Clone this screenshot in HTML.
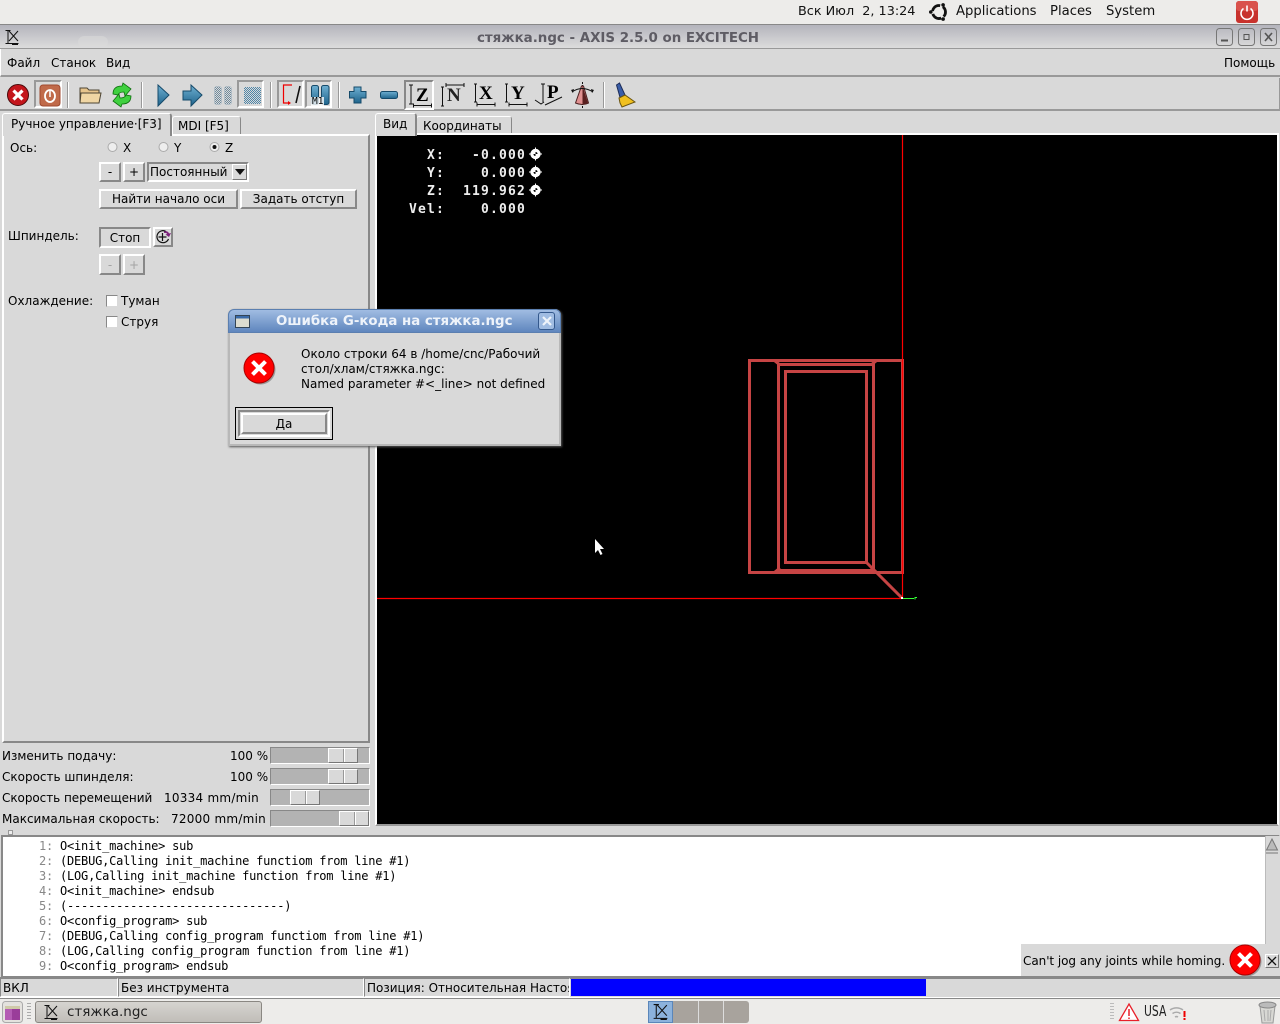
<!DOCTYPE html>
<html><head><meta charset="utf-8"><style>
html,body{margin:0;padding:0;width:1280px;height:1024px;overflow:hidden;background:#d9d9d9}
body{position:relative;font-family:"DejaVu Sans","Liberation Sans",sans-serif;font-size:12px;color:#000}
div,span,svg{position:absolute;box-sizing:border-box}
.t{white-space:nowrap;line-height:14px}
.b{background:#d9d9d9;border:2px solid;border-color:#fff #888 #888 #fff;text-align:center;white-space:nowrap;line-height:16px}
.s{background:#d9d9d9;border:2px solid;border-color:#888 #fff #fff #888}
.sep{width:2px;top:82px;height:26px;background:linear-gradient(90deg,#999 50%,#fff 50%)}
.tr{left:270px;width:100px;height:17px;background:#b3b3b3;border:1px solid;border-color:#888 #fff #fff #888}
.th{width:30px;height:15px;top:0;background:linear-gradient(90deg,#d9d9d9 14px,#999 14px,#999 15px,#fff 15px,#fff 16px,#d9d9d9 16px);border:1px solid;border-color:#fff #777 #777 #fff}
.m{font-family:"DejaVu Sans Mono",monospace;font-size:12px;letter-spacing:-.22px;line-height:15px;white-space:pre;left:4px}
.g{color:#888}
.d{font-family:"DejaVu Sans Mono",monospace;font-size:13px;letter-spacing:1.17px;color:#eee;white-space:pre;line-height:18px;font-weight:bold}
.p{font-size:13.2px;line-height:16px;color:#111;white-space:nowrap;top:4px}
.v{font-family:"Liberation Serif",serif;font-weight:bold;font-size:19px;line-height:22px}
.sl{letter-spacing:.25px}
</style></head><body>

<!-- top panel -->
<div style="left:0;top:0;width:1280px;height:25px;background:#edecea;border-bottom:1px solid #888"></div>
<div class="t p" style="left:798px;font-size:12.8px">Вск Июл&nbsp; 2, 13:24</div>
<svg style="left:929px;top:2px" width="20" height="20" viewBox="0 0 20 20"><circle cx="10" cy="10" r="6.500" fill="none" stroke="#111" stroke-width="2.800" pathLength="40.800" stroke-dasharray="10.600 3" transform="rotate(-47 10 10)"/><circle cx="1.800" cy="10" r="1.800" fill="#111"/><circle cx="14.100" cy="2.900" r="1.800" fill="#111"/><circle cx="14.100" cy="17.100" r="1.800" fill="#111"/></svg>
<div class="t p" style="left:956px">Applications</div>
<div class="t p" style="left:1050px">Places</div>
<div class="t p" style="left:1106px">System</div>
<svg style="left:1236px;top:1px" width="22" height="22" viewBox="0 0 22 22"><rect width="22" height="22" rx="3" fill="#c8322d"/><rect width="22" height="10" rx="3" fill="#d9524c"/><path d="M7.500 7.500a6 6 0 1 0 7 0" fill="none" stroke="#fff" stroke-width="1.600"/><path d="M11 4.500v6" stroke="#fff" stroke-width="1.600"/></svg>

<!-- title bar -->
<div style="left:0;top:25px;width:1280px;height:24px;background:linear-gradient(#b4b4bc,#dcdcdc);border-bottom:1px solid #999"></div>
<div style="left:78px;top:36px;width:30px;height:12px;background:#dcdcdc;border-radius:12px;opacity:.5"></div>
<svg style="left:4px;top:29px" width="16" height="17" viewBox="0 0 16 17" fill="none" stroke="#111"><path d="M1.500 1.500h5M4 1.500v13M1.500 14.500h13M8 15.500h6M5 2l9 10M14 2 5 12"/></svg>
<div class="t" style="left:0;top:32px;width:1236px;text-align:center;font-weight:bold;font-size:13.400px;color:#5e5c64">стяжка.ngc - AXIS 2.5.0 on EXCITECH</div>
<svg style="left:1215px;top:28px" width="65" height="18" viewBox="0 0 65 18" fill="none" stroke="#777"><rect x="1.500" y=".5" width="16" height="17" rx="3"/><rect x="23.500" y=".5" width="16" height="17" rx="3"/><rect x="45.500" y=".5" width="16" height="17" rx="3"/><path d="M6 12.500h7" stroke="#555" stroke-width="2"/><rect x="29" y="6.500" width="5" height="5" stroke="#555"/><path d="M50 5l7 8M57 5l-7 8" stroke="#555" stroke-width="1.600"/></svg>

<!-- menu -->
<div style="left:0;top:49px;width:1280px;height:28px;background:#d9d9d9;border-bottom:2px solid #999;border-left:1px solid #fff"></div>
<div class="t" style="left:7px;top:56px">Файл</div>
<div class="t" style="left:51px;top:56px">Станок</div>
<div class="t" style="left:106px;top:56px">Вид</div>
<div class="t" style="left:1224px;top:56px">Помощь</div>

<!-- toolbar -->
<div style="left:0;top:78px;width:1280px;height:33px;background:#d9d9d9;border-bottom:2px solid #999;border-right:1px solid #999"></div>
<div class="sep" style="left:67px"></div><div class="sep" style="left:141px"></div><div class="sep" style="left:270px"></div><div class="sep" style="left:338px"></div><div class="sep" style="left:603px"></div>
<div class="s" style="left:34px;top:80px;width:28px;height:28px;border-color:#999 #fff #fff #999"></div>
<div class="s" style="left:237px;top:80px;width:27px;height:28px;border-color:#999 #fff #fff #999"></div>
<div class="s" style="left:277px;top:80px;width:27px;height:28px;border-color:#999 #fff #fff #999"></div>
<div class="s" style="left:305px;top:80px;width:27px;height:28px;border-color:#999 #fff #fff #999"></div>
<div class="s" style="left:404px;top:80px;width:30px;height:30px;border-color:#888 #fff #fff #888"></div>
<svg style="left:0;top:78px" width="650" height="32" viewBox="0 78 650 32">
<defs><pattern id="dth" width="2" height="2" patternUnits="userSpaceOnUse"><rect width="2" height="2" fill="#d9d9d9"/><rect width="1" height="1" fill="#4f86a8"/><rect x="1" y="1" width="1" height="1" fill="#4f86a8"/></pattern>
<pattern id="dtp" width="2" height="2" patternUnits="userSpaceOnUse"><rect width="2" height="2" fill="#d9d9d9"/><rect width="1" height="1" fill="#6f8a9c"/><rect x="1" y="1" width="1" height="1" fill="#6f8a9c"/></pattern>
<linearGradient id="bl" x1="0" y1="0" x2="0" y2="1"><stop offset="0" stop-color="#6fb0d2"/><stop offset="1" stop-color="#1f648c"/></linearGradient></defs>
<circle cx="18" cy="95" r="10.500" fill="#c4161c" stroke="#4a0a0a"/><path d="M13.500 90.500l9 9M22.500 90.500l-9 9" stroke="#fff" stroke-width="3.200"/>
<rect x="40" y="85" width="20" height="21" rx="3" fill="#c06a4a" stroke="#a04a30"/><ellipse cx="50" cy="96" rx="5" ry="6" fill="none" stroke="#fff" stroke-width="1.800"/><path d="M50 91v6" stroke="#fff" stroke-width="1.500"/>
<path d="M80 103V88h7l2 2h10v13z" fill="#e6c48c" stroke="#4d4534"/><path d="M80 103l1-10h20l-2 10z" fill="#f0d6a4" stroke="#4d4534"/>
<path d="M113 94q0-8 9-8l1-3 8 6-6 7-1-4q-5 0-6 3z" fill="#3fd03f" stroke="#0e6e0e" stroke-width=".8"/><path d="M113 94q0-8 9-8l1-3 8 6-6 7-1-4q-5 0-6 3z" fill="#3fd03f" stroke="#0e6e0e" stroke-width=".8" transform="rotate(180 122 95)"/>
<path d="M158 85l11 10-11 11z" fill="url(#bl)" stroke="#154a6a"/>
<path d="M183 91h8v-6l11 10-11 11v-6h-8z" fill="url(#bl)" stroke="#154a6a"/>
<rect x="214.500" y="86.500" width="7" height="18" rx="2" fill="url(#dtp)" stroke="#a8b8c4" stroke-width=".6"/><rect x="224.500" y="86.500" width="7" height="18" rx="2" fill="url(#dtp)" stroke="#a8b8c4" stroke-width=".6"/>
<rect x="244" y="87" width="17" height="17" fill="url(#dth)"/>
<path d="M292 85h-8.500v18h6" fill="none" stroke="#e00" stroke-width="1.200"/><path d="M288 101l3 2-3 2z" fill="#e00"/><path d="M300 86l-4 17" stroke="#111" stroke-width="1.600"/>
<rect x="311.500" y="85.500" width="7" height="19" rx="2" fill="url(#bl)" stroke="#154a6a"/><rect x="321.500" y="85.500" width="7.500" height="19" rx="2" fill="url(#bl)" stroke="#154a6a"/>
<path d="M354.500 87.500h7v4.500h5v6.500h-5v5h-7v-5h-4.500v-6.500h4.500z" fill="url(#bl)" stroke="#154a6a" transform="translate(-.5 -.5)"/>
<rect x="380.500" y="91.500" width="17" height="7" rx="2" fill="url(#bl)" stroke="#154a6a"/>
<g fill="none" stroke="#111"><path d="M409 85h4M411 85v19M409 104h4M413.500 105.500h18M413.500 103.500v4M431.500 103.500v4"/>
<path d="M441 87h3M442.500 87v19M441 106h3M446 85h18M446 83v4M464 83v4"/>
<path d="M474 84h3M475.500 84v18M474 102h3M477 104.500h18M477 102.500v4M495 102.500v4"/>
<path d="M505 84h3M506.500 84v18M505 102h3M509 104.500h18M509 102.500v4M527 102.500v4"/>
<path d="M535 100l6 4 3-2M543 84v18M545 105l17-8M541 84h4"/></g>
<path d="M582.500 82v26" stroke="#111" stroke-dasharray="2 1"/><path d="M575.500 103l6-17h2l5 17q-6 3-13 0z" fill="#e09090" stroke="#4a2020"/><path d="M582.500 86l5.500 17q-3 2-5.500 1.500z" fill="#5a2020"/><path d="M572 92q10-7 21 0" fill="none" stroke="#111"/><path d="M571 90l3-1-1 4zM594 90l-3-1 1 4z" fill="#111"/>
<path d="M616.500 85l3-2 6 13-5 3z" fill="#3a5ea8" stroke="#1c2c58"/><path d="M619 98l6-3 10 7-13 5-2-4z" fill="#f0c020" stroke="#6a5410"/>
</svg>
<div class="t" style="left:311px;top:97px;font-family:'DejaVu Sans Mono',monospace;font-size:9.500px;background:rgba(255,255,255,.8);line-height:10px;padding:0 1px">M1</div>
<div class="t v" style="left:416px;top:85px">Z</div>
<div class="t v" style="left:447px;top:85px;color:#222">N</div>
<div class="t v" style="left:479px;top:83px">X</div>
<div class="t v" style="left:511px;top:83px">Y</div>
<div class="t v" style="left:547px;top:82px">P</div>

<!-- tabs left -->
<div style="left:172px;top:116px;width:69px;height:19px;background:#d9d9d9;border:1px solid #fff;border-right-color:#888;border-bottom:0;border-radius:3px 3px 0 0"></div>
<div style="left:2px;top:113px;width:170px;height:23px;background:#d9d9d9;border:1px solid #fff;border-right:2px solid #888;border-bottom:0;border-radius:3px 3px 0 0;z-index:2"></div>
<div class="t" style="left:11px;top:117px;z-index:3">Ручное управление·[F3]</div>
<div class="t" style="left:178px;top:119px">MDI [F5]</div>
<div style="left:2px;top:134px;width:368px;height:609px;border:2px solid;border-color:#fff #888 #888 #fff"></div>

<!-- tabs right -->
<div style="left:416px;top:116px;width:96px;height:19px;background:#d9d9d9;border:1px solid #fff;border-right-color:#888;border-bottom:0;border-radius:3px 3px 0 0"></div>
<div style="left:375px;top:113px;width:42px;height:23px;background:#d9d9d9;border:1px solid #fff;border-right:2px solid #888;border-bottom:0;border-radius:3px 3px 0 0;z-index:2"></div>
<div class="t" style="left:383px;top:117px;z-index:3">Вид</div>
<div class="t" style="left:423px;top:119px">Координаты</div>

<!-- left controls -->
<div class="t" style="left:10px;top:141px">Ось:</div>
<svg style="left:106px;top:141px" width="125" height="13" viewBox="0 0 125 13"><g fill="#eee" stroke="#aaa"><circle cx="6.500" cy="6" r="4.500"/><circle cx="57.500" cy="6" r="4.500"/><circle cx="108.500" cy="6" r="4.500"/></g><circle cx="108.500" cy="6" r="2" fill="#111"/></svg>
<div class="t" style="left:123px;top:141px">X</div>
<div class="t" style="left:174px;top:141px">Y</div>
<div class="t" style="left:225px;top:141px">Z</div>
<div class="b" style="left:99px;top:162px;width:22px;height:20px">-</div>
<div class="b" style="left:123px;top:162px;width:22px;height:20px">+</div>
<div class="s" style="left:147px;top:162px;width:102px;height:20px;border-right-color:#fff"></div>
<div class="t" style="left:150px;top:165px">Постоянный</div>
<div class="b" style="left:232px;top:164px;width:15px;height:16px;border-width:1px;border-color:#fff #777 #777 #fff"></div>
<svg style="left:235px;top:169px" width="10" height="6"><path d="M0 0h10L5 6z" fill="#111"/></svg>
<div class="b" style="left:99px;top:189px;width:139px;height:20px">Найти начало оси</div>
<div class="b" style="left:240px;top:189px;width:117px;height:20px">Задать отступ</div>
<div class="t" style="left:8px;top:229px">Шпиндель:</div>
<div class="s" style="left:99px;top:227px;width:52px;height:21px;text-align:center;line-height:18px;white-space:nowrap">Стоп</div>
<div class="b" style="left:153px;top:227px;width:20px;height:20px"></div>
<svg style="left:156px;top:229px" width="16" height="16" viewBox="0 0 16 16" fill="none" stroke="#111" stroke-width="1.200"><path d="M10 2.500A6 6 0 1 0 12.500 10"/><path d="M6.500 4v8M2.500 8h8"/><path d="M8 2.500q4-1 5 2l2-.5-2 4-3.500-2.500 1.800-.5q-1-1.500-3.300-1z" fill="#7a1f7a" stroke="none"/></svg>
<div class="b" style="left:99px;top:254px;width:22px;height:21px;color:#a3a3a3;line-height:18px">-</div>
<div class="b" style="left:123px;top:254px;width:22px;height:21px;color:#a3a3a3;line-height:18px">+</div>
<div class="t" style="left:8px;top:294px">Охлаждение:</div>
<div style="left:106px;top:295px;width:12px;height:12px;background:#fff;border:1px solid;border-color:#888 #d9d9d9 #d9d9d9 #888"></div>
<div class="t" style="left:121px;top:294px">Туман</div>
<div style="left:106px;top:316px;width:12px;height:12px;background:#fff;border:1px solid;border-color:#888 #d9d9d9 #d9d9d9 #888"></div>
<div class="t" style="left:121px;top:315px">Струя</div>

<!-- sliders -->
<div class="t" style="left:2px;top:749px">Изменить подачу:</div><div class="t" style="left:230px;top:749px">100 %</div>
<div class="tr" style="top:747px"><div class="th" style="left:57px"></div></div>
<div class="t" style="left:2px;top:770px">Скорость шпинделя:</div><div class="t" style="left:230px;top:770px">100 %</div>
<div class="tr" style="top:768px"><div class="th" style="left:57px"></div></div>
<div class="t" style="left:2px;top:791px;letter-spacing:-.05px">Скорость перемещений</div><div class="t sl" style="left:164px;top:791px">10334 mm/min</div>
<div class="tr" style="top:789px"><div class="th" style="left:19px"></div></div>
<div class="t" style="left:2px;top:812px">Максимальная скорость:</div><div class="t sl" style="left:171px;top:812px">72000 mm/min</div>
<div class="tr" style="top:810px"><div class="th" style="left:68px"></div></div>
<div style="left:8px;top:830px;width:5px;height:5px;background:#eee;border:1px solid #999"></div>

<!-- canvas -->
<div style="left:375px;top:133px;width:904px;height:693px;border:2px solid;border-color:#fff #fff #999 #fff;background:#000"></div>
<svg style="left:377px;top:135px" width="900" height="689" viewBox="377 135 900 689">
<g fill="none" stroke="#c64444" stroke-width="3">
<rect x="749.500" y="360.500" width="153" height="212" shape-rendering="crispEdges"/>
<rect x="778.500" y="364.500" width="95" height="206" shape-rendering="crispEdges"/>
<rect x="785.500" y="371.500" width="81" height="191" shape-rendering="crispEdges"/>
<path d="M775 361l5 4M876 361l-5 4M775 572l5-4M876 572l-5-4"/>
<path d="M866 562l36 36" stroke-width="3"/>
</g>
<path d="M902.500 135v463M377 598.500h525" stroke="#f00" stroke-width="1.200" fill="none"/>
<path d="M903 598.500h11M915 599.500v-2h2" stroke="#3f3" fill="none"/>
<rect x="901" y="597" width="2" height="2" fill="#fff"/>
<g fill="#fff"><circle cx="535.500" cy="154" r="5.200"/><path d="M535.500 147.500v13M529 154h13" stroke="#fff"/><path d="M535.500 152a2 2 0 0 1 2 2h-2z" fill="#000"/><path d="M535.500 156a2 2 0 0 1-2-2h2z" fill="#000"/></g>
<g fill="#fff"><circle cx="535.500" cy="172" r="5.200"/><path d="M535.500 165.500v13M529 172h13" stroke="#fff"/><path d="M535.500 170a2 2 0 0 1 2 2h-2z" fill="#000"/><path d="M535.500 174a2 2 0 0 1-2-2h2z" fill="#000"/></g>
<g fill="#fff"><circle cx="535.500" cy="190" r="5.200"/><path d="M535.500 183.500v13M529 190h13" stroke="#fff"/><path d="M535.500 188a2 2 0 0 1 2 2h-2z" fill="#000"/><path d="M535.500 192a2 2 0 0 1-2-2h2z" fill="#000"/></g>
<path d="M595 539v14l3-3 2.500 5 2-1-2.500-5h4z" fill="#fff"/>
</svg>
<div class="d" style="left:409px;top:147px">  X:   -0.000
  Y:    0.000
  Z:  119.962
Vel:    0.000</div>

<!-- text -->
<div style="left:1px;top:835px;width:1279px;height:143px;background:#fff;border:2px solid;border-color:#888 #fff #888 #888"></div>
<div class="m" style="top:839px"><span class="g" style="position:static">     1: </span>O&lt;init_machine&gt; sub
<span class="g" style="position:static">     2: </span>(DEBUG,Calling init_machine functiom from line #1)
<span class="g" style="position:static">     3: </span>(LOG,Calling init_machine function from line #1)
<span class="g" style="position:static">     4: </span>O&lt;init_machine&gt; endsub
<span class="g" style="position:static">     5: </span>(-------------------------------)
<span class="g" style="position:static">     6: </span>O&lt;config_program&gt; sub
<span class="g" style="position:static">     7: </span>(DEBUG,Calling config_program functiom from line #1)
<span class="g" style="position:static">     8: </span>(LOG,Calling config_program function from line #1)
<span class="g" style="position:static">     9: </span>O&lt;config_program&gt; endsub</div>
<div style="left:1265px;top:836px;width:15px;height:141px;background:#d9d9d9;border-left:1px solid #bbb"></div>
<svg style="left:1265px;top:838px" width="14" height="16"><path d="M7 1l5.500 11h-11z" fill="#bbb" stroke="#777"/><path d="M1 15h12" stroke="#777"/></svg>

<!-- status -->
<div style="left:0;top:977px;width:1280px;height:21px;background:#d9d9d9;border-top:2px solid #888;border-bottom:1px solid #fff"></div>
<div class="s" style="left:0;top:978px;width:118px;height:19px;border-width:1px"></div>
<div class="s" style="left:118px;top:978px;width:246px;height:19px;border-width:1px"></div>
<div class="s" style="left:364px;top:978px;width:206px;height:19px;border-width:1px"></div>
<div class="t" style="left:3px;top:981px">ВКЛ</div>
<div class="t" style="left:121px;top:981px">Без инструмента</div>
<div class="t" style="left:367px;top:981px;width:202px;overflow:hidden;position:absolute">Позиция: Относительная Настоящая</div>
<div style="left:571px;top:979px;width:355px;height:17px;background:#00f"></div>

<!-- notification -->
<div style="left:1021px;top:944px;width:259px;height:33px;background:#d9d9d9;border-bottom:1px solid #888"></div>
<div class="t" style="left:1023px;top:954px;letter-spacing:-.05px">Can't jog any joints while homing.</div>
<svg style="left:1228px;top:943px" width="36" height="36" viewBox="0 0 36 36"><circle cx="18.500" cy="18.500" r="15" fill="#999"/><circle cx="17" cy="17" r="15" fill="#f00" stroke="#a00"/><path d="M10.500 10.500l13 13M23.500 10.500l-13 13" stroke="#fff" stroke-width="4"/></svg>
<div class="b" style="left:1265px;top:954px;width:14px;height:14px;border-width:1px;border-color:#fff #777 #777 #fff"></div>
<svg style="left:1267px;top:956px" width="10" height="10"><path d="M1 1l8 8M9 1l-8 8" stroke="#111" stroke-width="1.300"/></svg>

<!-- bottom panel -->
<div style="left:0;top:998px;width:1280px;height:26px;background:#edecea;border-top:1px solid #888"></div>
<svg style="left:2px;top:1001px" width="22" height="22" viewBox="0 0 22 22"><rect x=".5" y=".5" width="20" height="21" rx="3" fill="#e4e2de" stroke="#aaa"/><rect x="3" y="5" width="15" height="14" fill="#9a3d9a"/><rect x="3" y="5" width="15" height="3" fill="#cfc9a8"/><rect x="3" y="8" width="7" height="11" fill="#b45cb4"/></svg>
<div style="left:27px;top:1003px;width:4px;height:18px;background:repeating-linear-gradient(#aaa 0 1px,transparent 1px 3px)"></div>
<div style="left:35px;top:1001px;width:227px;height:22px;background:linear-gradient(#d6d4d0,#c0bdb8);border:1px solid #8a8782;border-radius:3px"></div>
<svg style="left:43px;top:1004px" width="16" height="17" viewBox="0 0 16 17" fill="none" stroke="#111"><path d="M1.500 1.500h5M4 1.500v13M1.500 14.500h13M8 15.500h6M5 2l9 10M14 2 5 12"/></svg>
<div class="t" style="left:67px;top:1005px;font-size:13.500px;color:#222">стяжка.ngc</div>
<div style="left:648px;top:1001px;width:101px;height:22px;background:#a8a39d;border-radius:3px"></div>
<div style="left:648px;top:1001px;width:25px;height:22px;background:#8cb2dc;border:1px solid #5a86ba"></div>
<div style="left:698px;top:1001px;width:1px;height:22px;background:#ddd"></div>
<div style="left:723px;top:1001px;width:1px;height:22px;background:#ddd"></div>
<svg style="left:652px;top:1003px" width="17" height="18" viewBox="0 0 16 17" fill="none" stroke="#111"><path d="M1.500 1.500h5M4 1.500v13M1.500 14.500h13M8 15.500h6M5 2l9 10M14 2 5 12"/></svg>
<div style="left:1110px;top:1003px;width:4px;height:18px;background:repeating-linear-gradient(#bbb 0 1px,transparent 1px 3px)"></div>
<svg style="left:1118px;top:1002px" width="22" height="20" viewBox="0 0 22 20"><path d="M11 2l9.500 16.500h-19z" fill="#fff" stroke="#e8202a" stroke-width="1.300"/><path d="M11 7v7M11 15.500v1.500" stroke="#e8202a" stroke-width="1.500"/></svg>
<div class="t" style="left:1144px;top:1004px;font-size:15px;color:#222;transform:scaleX(.72);transform-origin:0 0">USA</div>
<svg style="left:1169px;top:1003px" width="18" height="18" viewBox="0 0 18 18" fill="none" stroke="#aaa" stroke-width="1.500"><path d="M1 7a11 11 0 0 1 13 0M3.500 10.500a7 7 0 0 1 8 0M6 14a3 3 0 0 1 3 0"/><path d="M15.500 8v6M15.500 15v2" stroke="#e00" stroke-width="2"/></svg>
<svg style="left:1257px;top:1001px" width="22" height="23" viewBox="0 0 22 23"><path d="M3 5l2 17h11l2-17z" fill="#d8d8d4" stroke="#999"/><ellipse cx="10.500" cy="4" rx="8.500" ry="3" fill="#bbb" stroke="#888"/><path d="M7 9l1 11M11 9v11M14 9l-1 11" stroke="#aaa"/></svg>

<!-- dialog -->
<div style="left:228px;top:309px;width:333px;height:137px;background:#d9d9d9;border:2px solid #b8b8b8;border-top:0;border-radius:6px 6px 0 0;box-shadow:1px 1px 2px #555;z-index:5">
</div>
<div style="left:228px;top:309px;width:333px;height:24px;background:linear-gradient(#a0bce2,#5f86be);border:1px solid #5b7fb0;border-radius:6px 6px 0 0;z-index:5"></div>
<svg style="left:235px;top:315px;z-index:6" width="15" height="13"><rect x=".5" y=".5" width="14" height="12" fill="#dcdcd0" stroke="#345"/><rect x="1" y="1" width="13" height="2.500" fill="#3a6aa8"/></svg>
<div class="t" style="left:276px;top:315px;font-weight:bold;font-size:13.350px;color:#eef3fa;z-index:6">Ошибка G-кода на стяжка.ngc</div>
<div style="left:538px;top:312px;width:17px;height:18px;border:1px solid #34588c;border-radius:3px;background:#a0bce2;z-index:6"></div>
<svg style="left:541px;top:315px;z-index:7" width="12" height="12"><path d="M2 2l8 8M10 2l-8 8" stroke="#eef3fa" stroke-width="2.200"/></svg>
<svg style="left:242px;top:350px;z-index:6" width="36" height="36" viewBox="0 0 36 36"><circle cx="18.500" cy="19.500" r="15" fill="#999"/><circle cx="17" cy="18" r="15" fill="#f00" stroke="#a00"/><path d="M10.500 11.500l13 13M23.500 11.500l-13 13" stroke="#fff" stroke-width="4"/></svg>
<div style="left:301px;top:347px;font-size:12px;line-height:15px;white-space:nowrap;z-index:6">Около строки 64 в /home/cnc/Рабочий<br>стол/хлам/стяжка.ngc:<br>Named parameter #&lt;_line&gt; not defined</div>
<div style="left:235px;top:407px;width:98px;height:33px;border:1px solid #000;z-index:6"></div>
<div class="s" style="left:238px;top:410px;width:92px;height:27px;z-index:6;border-width:2px;border-color:#888 #fff #fff #888"></div>
<div class="b" style="left:241px;top:413px;width:86px;height:21px;z-index:7;line-height:18px">Да</div>
</body></html>
